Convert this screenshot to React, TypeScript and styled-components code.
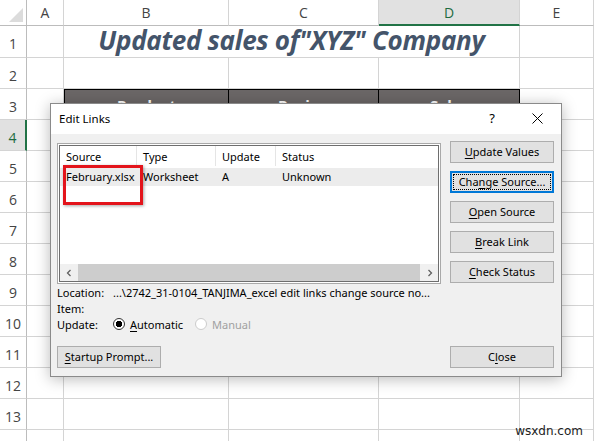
import React from "react";
import styled, { createGlobalStyle } from "styled-components";

const GlobalStyle = createGlobalStyle`
  html, body {
    margin: 0;
    padding: 0;
    background: #fff;
  }
  body {
    width: 594px;
    height: 441px;
    overflow: hidden;
    font-family: "Noto Sans", "Open Sans", sans-serif;
  }
`;

const Page = styled.div`
  position: relative;
  width: 594px;
  height: 441px;
  overflow: hidden;
  background: #fff;
`;

/* ---------- worksheet ---------- */

const Sheet = styled.div`
  display: grid;
  grid-template-columns: 27px 37px 165px 150px 141px 74px;
  grid-template-rows: 26px 32px repeat(13, 31px);
`;

const Corner = styled.div`
  border-right: 1px solid #bcbcbc;
  border-bottom: 1px solid #bcbcbc;
  display: flex;
  align-items: flex-end;
  justify-content: flex-end;
  padding: 0 3px 3px 0;
`;

const ColHead = styled.div<{ $active?: boolean }>`
  display: flex;
  align-items: center;
  justify-content: center;
  font-family: "Open Sans", sans-serif;
  font-size: 14px;
  color: ${(p) => (p.$active ? "#1d6b40" : "#444")};
  background: ${(p) => (p.$active ? "#e1e1e1" : "#fff")};
  border-right: 1px solid #d4d4d4;
  border-bottom: ${(p) => (p.$active ? "2px solid #217346" : "1px solid #bcbcbc")};
`;

const RowHead = styled.div<{ $active?: boolean }>`
  display: flex;
  align-items: center;
  justify-content: center;
  padding-top: 4px;
  font-family: "Open Sans", sans-serif;
  font-size: 14px;
  color: ${(p) => (p.$active ? "#1d6b40" : "#444")};
  background: ${(p) => (p.$active ? "#e1e1e1" : "#fff")};
  border-bottom: 1px solid #d4d4d4;
  border-right: ${(p) => (p.$active ? "2px solid #217346" : "1px solid #bcbcbc")};
`;

const Cell = styled.div`
  border-right: 1px solid #d4d4d4;
  border-bottom: 1px solid #d4d4d4;
`;

const TitleCell = styled.div`
  grid-column: 3 / 6;
  display: flex;
  align-items: center;
  justify-content: center;
  padding-bottom: 3px;
  border-bottom: 1px solid #d4d4d4;
  border-right: 1px solid #d4d4d4;
  font-family: "Open Sans", sans-serif;
  font-weight: 700;
  font-style: italic;
  font-size: 26px;
  color: #44546a;
  letter-spacing: -0.3px;
  white-space: nowrap;
`;

const HeadCell = styled.div<{ $first?: boolean }>`
  display: flex;
  align-items: center;
  justify-content: center;
  background: #6b6767;
  border-top: 1px solid #000;
  border-right: 1px solid #000;
  border-left: ${(p) => (p.$first ? "1px solid #000" : "none")};
  font-family: "Open Sans", sans-serif;
  font-weight: 700;
  font-size: 15px;
  color: #fff;
`;

/* ---------- dialog ---------- */

const Dialog = styled.div`
  position: absolute;
  left: 50px;
  top: 103px;
  width: 512px;
  height: 274px;
  box-sizing: border-box;
  border: 1px solid #8a8a8a;
  background: #f0f0f0;
  box-shadow: 0 2px 14px rgba(0, 0, 0, 0.28);
  display: flex;
  flex-direction: column;
  font-size: 11px;
  color: #000;
`;

const TitleBar = styled.div`
  height: 30px;
  background: #fff;
  display: flex;
  align-items: center;
  padding: 0 9px 2px 8px;
  box-sizing: border-box;
`;

const TitleText = styled.div`
  flex: 1;
  font-size: 11.5px;
`;

const TitleButton = styled.div`
  width: 30px;
  height: 28px;
  display: flex;
  align-items: center;
  justify-content: center;
  font-size: 13px;
  & + & {
    margin-left: 15px;
  }
`;

const Body = styled.div`
  flex: 1;
  display: flex;
  flex-direction: column;
  padding: 9px 7px 8px 6px;
`;

const TopRow = styled.div`
  display: flex;
  gap: 9px;
`;

const ListBox = styled.div`
  width: 384px;
  height: 141px;
  box-sizing: border-box;
  border: 1px solid #a9a9a9;
  padding: 1px;
  background: #fff;
  box-shadow: inset 0 0 0 1px #fff, inset 0 0 0 2px #6e6e6e;
  display: flex;
  flex-direction: column;
`;

const ListInner = styled.div`
  flex: 1;
  display: flex;
  flex-direction: column;
  margin: 1px;
  overflow: hidden;
`;

const ListRow = styled.div<{ $header?: boolean }>`
  display: grid;
  grid-template-columns: 77px 79px 60px 1fr;
  height: ${(p) => (p.$header ? "22px" : "18px")};
  box-sizing: border-box;
  padding-bottom: ${(p) => (p.$header ? "2px" : "1px")};
  background: ${(p) => (p.$header ? "#fff" : "#ececec")};
`;

const ListCol = styled.div<{ $header?: boolean }>`
  display: flex;
  align-items: center;
  padding-left: 6px;
  white-space: nowrap;
  border-right: ${(p) => (p.$header ? "1px solid #e5e5e5" : "none")};
`;

const ListSpace = styled.div`
  flex: 1;
`;

const HScroll = styled.div`
  height: 17px;
  display: flex;
  align-items: stretch;
  background: #f0f0f0;
`;

const ScrollArrow = styled.div`
  width: 17px;
  display: flex;
  align-items: center;
  justify-content: center;
`;

const ScrollThumb = styled.div`
  flex: 1;
  background: #cdcdcd;
  margin: 0 1px;
`;

const ButtonColumn = styled.div`
  display: flex;
  flex-direction: column;
  gap: 8px;
  margin-top: -2px;
`;

const Button = styled.div<{ $focused?: boolean }>`
  width: 104px;
  height: 22px;
  box-sizing: border-box;
  display: flex;
  align-items: center;
  justify-content: center;
  padding-bottom: 1px;
  background: #e1e1e1;
  border: ${(p) => (p.$focused ? "2px solid #0078d7" : "1px solid #adadad")};
  font-size: 11px;
  white-space: nowrap;
  position: relative;
  ${(p) =>
    p.$focused &&
    `&::after {
      content: "";
      position: absolute;
      inset: 1px;
      border: 1px dotted #000;
    }`}
`;

const Key = styled.span`
  text-decoration: underline;
  text-underline-offset: 2px;
`;

const InfoLine = styled.div`
  display: flex;
  align-items: center;
  height: 16px;
  white-space: nowrap;
  &:first-of-type {
    margin-top: 2px;
  }
`;

const InfoLabel = styled.div`
  width: 56px;
  flex: none;
`;

const Radio = styled.div<{ $checked?: boolean; $disabled?: boolean }>`
  display: flex;
  align-items: center;
  gap: 5px;
  color: ${(p) => (p.$disabled ? "#a0a0a0" : "#000")};
  margin-right: 12px;
  &::before {
    content: "";
    width: 12px;
    height: 12px;
    box-sizing: border-box;
    border-radius: 50%;
    border: 1px solid ${(p) => (p.$disabled ? "#cccccc" : "#333")};
    background: ${(p) =>
      p.$checked
        ? "radial-gradient(circle, #000 0 3px, #fff 3.5px)"
        : "#fff"};
  }
`;

const BottomRow = styled.div`
  margin-top: auto;
  display: flex;
  justify-content: space-between;
`;

const Highlight = styled.div`
  position: absolute;
  left: 63px;
  top: 165px;
  width: 80px;
  height: 40px;
  box-sizing: border-box;
  border: 3px solid #e3141b;
  box-shadow: 1px 1px 3px rgba(0, 0, 0, 0.35);
`;

const Watermark = styled.div`
  position: absolute;
  right: 11px;
  bottom: 3px;
  font-family: "DejaVu Sans", sans-serif;
  font-size: 12px;
  color: #222;
`;

const columns = ["A", "B", "C", "D", "E"];
const rows = Array.from({ length: 14 }, (_, i) => i + 1);

function Chevron({ dir }: { dir: "left" | "right" }) {
  return (
    <svg width="8" height="8" viewBox="0 0 8 8">
      <path
        d={dir === "left" ? "M5.5 1 L2.5 4 L5.5 7" : "M2.5 1 L5.5 4 L2.5 7"}
        fill="none"
        stroke="#606060"
        strokeWidth="1.3"
      />
    </svg>
  );
}

function SheetGrid() {
  return (
    <Sheet>
      <Corner>
        <svg width="14" height="14" viewBox="0 0 14 14">
          <polygon points="14,0 14,14 0,14" fill="#dcdcdc" />
        </svg>
      </Corner>
      {columns.map((c) => (
        <ColHead key={c} $active={c === "D"}>
          {c}
        </ColHead>
      ))}
      {rows.map((r) => (
        <React.Fragment key={r}>
          {/* the last row only peeks in at the bottom edge */}
          <RowHead $active={r === 4}>{r < 14 ? r : ""}</RowHead>
          {r === 1 ? (
            <>
              <Cell />
              <TitleCell>Updated sales of"XYZ" Company</TitleCell>
              <Cell />
            </>
          ) : r === 3 ? (
            <>
              <Cell />
              <HeadCell $first>Product</HeadCell>
              <HeadCell>Region</HeadCell>
              <HeadCell>Sales</HeadCell>
              <Cell />
            </>
          ) : (
            columns.map((c) => <Cell key={c} />)
          )}
        </React.Fragment>
      ))}
    </Sheet>
  );
}

function EditLinksDialog() {
  return (
    <Dialog>
      <TitleBar>
        <TitleText>Edit Links</TitleText>
        <TitleButton>?</TitleButton>
        <TitleButton>
          <svg width="11" height="11" viewBox="0 0 11 11">
            <path d="M0.5 0.5 L10.5 10.5 M10.5 0.5 L0.5 10.5" stroke="#000" strokeWidth="1" />
          </svg>
        </TitleButton>
      </TitleBar>
      <Body>
        <TopRow>
          <ListBox>
            <ListInner>
              <ListRow $header>
                <ListCol $header>Source</ListCol>
                <ListCol $header>Type</ListCol>
                <ListCol $header>Update</ListCol>
                <ListCol>Status</ListCol>
              </ListRow>
              <ListRow>
                <ListCol>February.xlsx</ListCol>
                <ListCol>Worksheet</ListCol>
                <ListCol>A</ListCol>
                <ListCol>Unknown</ListCol>
              </ListRow>
              <ListSpace />
              <HScroll>
                <ScrollArrow>
                  <Chevron dir="left" />
                </ScrollArrow>
                <ScrollThumb />
                <ScrollArrow>
                  <Chevron dir="right" />
                </ScrollArrow>
              </HScroll>
            </ListInner>
          </ListBox>
          <ButtonColumn>
            <Button>
              <Key>U</Key>pdate Values
            </Button>
            <Button $focused>
              Cha<Key>n</Key>ge Source...
            </Button>
            <Button>
              <Key>O</Key>pen Source
            </Button>
            <Button>
              <Key>B</Key>reak Link
            </Button>
            <Button>
              <Key>C</Key>heck Status
            </Button>
          </ButtonColumn>
        </TopRow>
        <InfoLine>
          <InfoLabel>Location:</InfoLabel>
          ...\2742_31-0104_TANJIMA_excel edit links change source no...
        </InfoLine>
        <InfoLine>
          <InfoLabel>Item:</InfoLabel>
        </InfoLine>
        <InfoLine>
          <InfoLabel>Update:</InfoLabel>
          <Radio $checked>
            <span>
              <Key>A</Key>utomatic
            </span>
          </Radio>
          <Radio $disabled>Manual</Radio>
        </InfoLine>
        <BottomRow>
          <Button>
            <Key>S</Key>tartup Prompt...
          </Button>
          <Button>
            C<Key>l</Key>ose
          </Button>
        </BottomRow>
      </Body>
    </Dialog>
  );
}

export default function App() {
  return (
    <Page>
      <GlobalStyle />
      <SheetGrid />
      <EditLinksDialog />
      <Highlight />
      <Watermark>wsxdn.com</Watermark>
    </Page>
  );
}
